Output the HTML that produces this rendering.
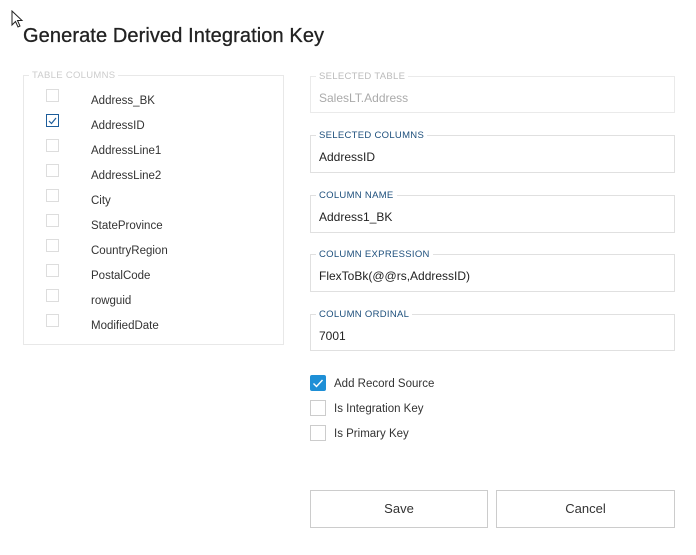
<!DOCTYPE html>
<html><head><style>
*{box-sizing:border-box;margin:0;padding:0}
body{width:696px;height:555px;background:#fff;font-family:"Liberation Sans",sans-serif;color:#333;position:relative;overflow:hidden}
.a{position:absolute}
h1{position:absolute;left:23px;top:25px;font-size:20px;font-weight:normal;color:#222;letter-spacing:0.1px;-webkit-text-stroke:0.3px #222}
.fs{position:absolute;border:1px solid #e0e0e0}
.lg{position:absolute;top:-6px;left:5px;background:#fff;padding:0 3px;font-size:9.5px;line-height:11px;color:#1d4f7c;letter-spacing:0.3px}
.val{position:absolute;left:8px;font-size:12px;color:#222}
.cb{position:absolute;width:13px;height:13px;border:1px solid #ddd;background:#fff}
.row{position:absolute;left:91px;font-size:11.5px;color:#333;margin-top:2px}
.cb2{position:absolute;left:310px;width:16px;height:16px;border:1px solid #ccc;background:#fff}
.lab{position:absolute;left:334px;font-size:11.5px;color:#333;margin-top:1px}
.btn{position:absolute;top:490px;height:38px;border:1px solid #ccc;text-align:center;line-height:36px;font-size:13px;color:#333}
</style></head><body>
<svg class="a" style="left:11px;top:10px" width="14" height="20" viewBox="0 0 14 20"><path d="M1 1 L1 15 L4.5 11.5 L7 17 L9 16 L6.5 10.5 L11 10.5 Z" fill="#fff" stroke="#222" stroke-width="1"/></svg>
<h1>Generate Derived Integration Key</h1>

<div class="fs" style="left:23px;top:75px;width:261px;height:270px;border-color:#e8e8e8">
<div class="lg" style="color:#ccc">TABLE COLUMNS</div>
</div>
<div class="cb" style="left:46px;top:89px"></div><div class="row" style="top:93px">Address_BK</div>
<div class="cb" style="left:46px;top:114px;border-color:#1d5d9b"><svg width="11" height="11" viewBox="0 0 11 11" style="position:absolute;left:0;top:0"><path d="M2 6 L4.5 8.5 L9 3" fill="none" stroke="#1d5d9b" stroke-width="1.2"/></svg></div><div class="row" style="top:118px">AddressID</div>
<div class="cb" style="left:46px;top:139px"></div><div class="row" style="top:143px">AddressLine1</div>
<div class="cb" style="left:46px;top:164px"></div><div class="row" style="top:168px">AddressLine2</div>
<div class="cb" style="left:46px;top:189px"></div><div class="row" style="top:193px">City</div>
<div class="cb" style="left:46px;top:214px"></div><div class="row" style="top:218px">StateProvince</div>
<div class="cb" style="left:46px;top:239px"></div><div class="row" style="top:243px">CountryRegion</div>
<div class="cb" style="left:46px;top:264px"></div><div class="row" style="top:268px">PostalCode</div>
<div class="cb" style="left:46px;top:289px"></div><div class="row" style="top:293px">rowguid</div>
<div class="cb" style="left:46px;top:314px"></div><div class="row" style="top:318px">ModifiedDate</div>

<div class="fs" style="left:310px;top:76px;width:365px;height:37px;border-color:#eaeaea"><div class="lg" style="color:#bbb">SELECTED TABLE</div><div class="val" style="top:14px;color:#aaa">SalesLT.Address</div></div>
<div class="fs" style="left:310px;top:135px;width:365px;height:38px"><div class="lg">SELECTED COLUMNS</div><div class="val" style="top:14px">AddressID</div></div>
<div class="fs" style="left:310px;top:195px;width:365px;height:38px"><div class="lg">COLUMN NAME</div><div class="val" style="top:14px">Address1_BK</div></div>
<div class="fs" style="left:310px;top:254px;width:365px;height:38px"><div class="lg">COLUMN EXPRESSION</div><div class="val" style="top:14px">FlexToBk(@@rs,AddressID)</div></div>
<div class="fs" style="left:310px;top:314px;width:365px;height:37px"><div class="lg">COLUMN ORDINAL</div><div class="val" style="top:14px">7001</div></div>

<div class="cb2" style="top:375px;background:#1e8fd6;border-color:#1e8fd6;border-radius:2px"><svg width="16" height="16" viewBox="0 0 16 16" style="position:absolute;left:-1px;top:-1px"><path d="M3.5 8.5 L6.5 11.5 L12.5 5" fill="none" stroke="#fff" stroke-width="1.4"/></svg></div>
<div class="lab" style="top:377px">Add Record Source</div>
<div class="cb2" style="top:400px"></div><div class="lab" style="top:402px">Is Integration Key</div>
<div class="cb2" style="top:425px"></div><div class="lab" style="top:427px">Is Primary Key</div>

<div class="btn" style="left:310px;width:178px">Save</div>
<div class="btn" style="left:496px;width:179px">Cancel</div>
</body></html>
